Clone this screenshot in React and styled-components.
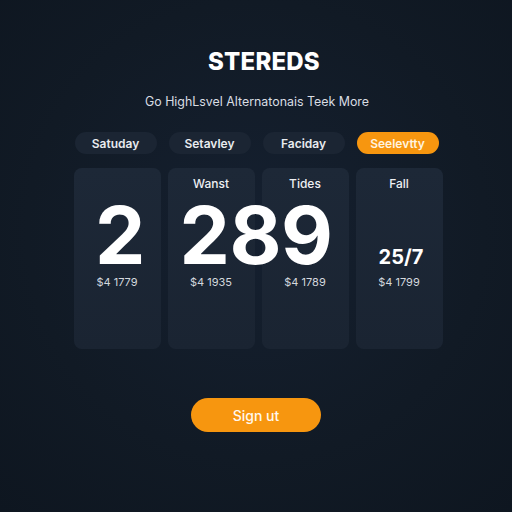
import React from "react";
import styled, { createGlobalStyle } from "styled-components";

const GlobalStyle = createGlobalStyle`
  html, body {
    margin: 0;
    padding: 0;
    background: #111a25;
  }
  body {
    font-family: Inter, "Open Sans", "Liberation Sans", sans-serif;
    color: #ffffff;
  }
`;

const Page = styled.main`
  width: 512px;
  height: 512px;
  display: flex;
  flex-direction: column;
  align-items: center;
  padding-top: 48px;
  box-sizing: border-box;
  background: radial-gradient(circle at 50% 45%, #152030 0%, #111a25 60%, #0e1620 100%);
`;

const Title = styled.h1`
  margin: 0 0 0 16px;
  font-size: 24px;
  line-height: 28px;
  font-weight: 800;
  letter-spacing: 0.2px;
`;

const Subtitle = styled.p`
  margin: 18px 0 0 2px;
  font-size: 12.4px;
  line-height: 16px;
  color: #d9dde3;
`;

const Grid = styled.div`
  display: grid;
  grid-template-columns: repeat(4, 87px);
  column-gap: 7px;
  margin-left: 4px;
`;

const Tabs = styled(Grid)`
  margin-top: 22px;
`;

const Tab = styled.button`
  width: 82px;
  height: 22px;
  margin-left: 1px;
  border: none;
  border-radius: 11px;
  background: ${(p) => (p.$active ? "#f7960f" : "#1b2533")};
  color: ${(p) => (p.$active ? "#fff4e0" : "#e8ebef")};
  font-family: inherit;
  font-size: 12px;
  font-weight: 600;
  padding: 0;
`;

const Cards = styled(Grid)`
  margin-top: 14px;
`;

const Card = styled.section`
  height: 181px;
  border-radius: 8px;
  background: linear-gradient(180deg, #1d2837 0%, #1a2432 100%);
  padding-top: 8px;
  box-sizing: border-box;
  display: flex;
  flex-direction: column;
  align-items: ${(p) => (p.$left ? "flex-start" : "center")};
`;

const Label = styled.div`
  align-self: center;
  height: 16px;
  font-size: 12px;
  line-height: 16px;
  font-weight: 500;
  color: #eef0f3;
`;

const Big = styled.div`
  position: relative;
  z-index: 1;
  margin-top: 3px;
  height: 80px;
  font-size: 80px;
  line-height: 80px;
  font-weight: 700;
  white-space: nowrap;
  padding-left: ${(p) => (p.$left ? "12px" : "6px")};
  letter-spacing: -0.5px;
`;

const Small = styled.div`
  margin-top: 3px;
  height: 80px;
  display: flex;
  align-items: flex-end;
  padding-bottom: 6px;
  padding-left: 4px;
  box-sizing: border-box;
  font-size: 20px;
  line-height: 24px;
  font-weight: 700;
`;

const Amount = styled.div`
  align-self: center;
  font-size: 11px;
  line-height: 14px;
  color: #d4d8de;
`;

const SignOut = styled.button`
  margin-top: 49px;
  width: 130px;
  height: 34px;
  border: none;
  border-radius: 17px;
  background: #f7960f;
  color: #fff8ee;
  font-family: inherit;
  font-size: 14px;
  font-weight: 500;
`;

const tabs = ["Satuday", "Setavley", "Faciday", "Seelevtty"];

const cards = [
  { label: "", value: "2", amount: "$4 1779" },
  { label: "Wanst", value: "289", amount: "$4 1935", left: true },
  { label: "Tides", value: "", amount: "$4 1789" },
  { label: "Fall", small: "25/7", amount: "$4 1799" },
];

export default function App() {
  return (
    <>
      <GlobalStyle />
      <Page>
        <Title>STEREDS</Title>
        <Subtitle>Go HighLsvel Alternatonais Teek More</Subtitle>
        <Tabs>
          {tabs.map((t, i) => (
            <Tab key={t} $active={i === 3}>
              {t}
            </Tab>
          ))}
        </Tabs>
        <Cards>
          {cards.map((c) => (
            <Card key={c.amount} $left={c.left}>
              <Label>{c.label}</Label>
              {c.small ? (
                <Small>{c.small}</Small>
              ) : (
                <Big $left={c.left}>{c.value}</Big>
              )}
              <Amount>{c.amount}</Amount>
            </Card>
          ))}
        </Cards>
        <SignOut>Sign ut</SignOut>
      </Page>
    </>
  );
}
